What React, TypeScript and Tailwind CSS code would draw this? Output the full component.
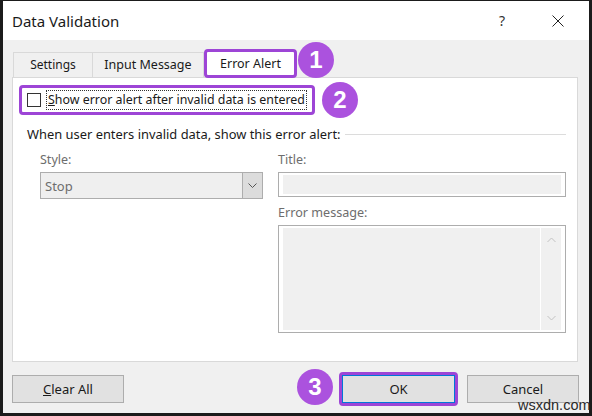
export default function App() {
  return (
    <div className="relative h-[416px] w-[592px] overflow-hidden bg-[#1b1b1b] pb-[3px] pl-[3px] pr-[3px] pt-[1px] font-['Noto_Sans',sans-serif] text-[12px] leading-[16px] text-[#1a1a1a]">
      <div className="flex h-full flex-col bg-[#f0f0f0]">
        {/* Title bar */}
        <div className="flex h-[39px] shrink-0 items-center bg-white pl-[9px]">
          <span className="text-[15px] leading-[20px]">Data Validation</span>
          <span className="ml-auto text-[14px] leading-[16px] text-[#333]">?</span>
          <svg className="ml-[47px] mr-[25px]" width="12" height="12" viewBox="0 0 12 12">
            <path d="M0.5 0.5 L11.5 11.5 M11.5 0.5 L0.5 11.5" stroke="#222" strokeWidth="1" fill="none" />
          </svg>
        </div>

        {/* Tabs */}
        <div className="ml-[10px] mt-[10px] flex h-[27px] shrink-0 items-end">
          <div className="flex h-[25px] w-[79px] items-center justify-center border-l border-t border-[#d9d9d9] bg-[#f0f0f0]">
            Settings
          </div>
          <div className="flex h-[25px] w-[112px] items-center justify-center border-l border-r border-t border-[#d9d9d9] bg-[#f0f0f0] text-[12.5px]">
            Input Message
          </div>
          <div className="relative z-10 mb-[-1px] flex h-[29px] w-[93px] items-center justify-center rounded-[4px] border-[3px] border-[#9d45d6] bg-white text-[12.5px]">
            Error Alert
          </div>
        </div>

        {/* Panel */}
        <div className="ml-[9px] flex h-[285px] w-[566px] shrink-0 flex-col border border-[#d9d9d9] bg-white">
          <div className="ml-[6px] mt-[7px] flex h-[30px] w-[296px] items-center rounded-[4px] border-[3px] border-[#9d45d6]">
            <div className="ml-[5px] h-[14px] w-[14px] border border-[#333] bg-white" />
            <div className="ml-[5px] flex h-[20px] items-center border border-dotted border-[#333] pl-px pr-px text-[12.4px]">
              <span>
                <span className="underline">S</span>how error alert after invalid data is entered
              </span>
            </div>
          </div>

          <div className="ml-[14px] mr-[11px] mt-[11px] flex items-center">
            <span className="whitespace-nowrap text-[12.9px]">When user enters invalid data, show this error alert:</span>
            <div className="ml-[4px] h-px flex-1 bg-[#dcdcdc]" />
          </div>

          <div className="ml-[27px] mt-[10px] flex gap-[15px]">
            <div className="flex w-[223px] flex-col">
              <span className="text-[12.5px] text-[#6d6d6d]">Style:</span>
              <div className="mt-[4px] flex h-[27px] items-stretch border border-[#adadad] bg-[#efefef]">
                <span className="flex flex-1 items-center pl-[4px] text-[13px] text-[#6d6d6d]">Stop</span>
                <div className="flex w-[20px] items-center justify-center border-l border-[#adadad] bg-[#dcdcdc]">
                  <svg width="9" height="6" viewBox="0 0 9 6">
                    <path d="M0.5 0.5 L4.5 4.5 L8.5 0.5" stroke="#555" strokeWidth="1" fill="none" />
                  </svg>
                </div>
              </div>
            </div>
            <div className="flex w-[288px] flex-col">
              <span className="text-[12.5px] text-[#6d6d6d]">Title:</span>
              <div className="mt-[4px] h-[25px] border border-[#adadad] bg-white p-[2px] pl-[4px] pr-[4px]">
                <div className="h-full w-full bg-[#f0f0f0]" />
              </div>
              <span className="mt-[8px] text-[12.6px] text-[#6d6d6d]">Error message:</span>
              <div className="mt-[4px] flex h-[108px] border border-[#adadad] bg-white p-[2px] pl-[4px]">
                <div className="h-full flex-1 bg-[#f0f0f0]" />
                <div className="ml-px flex h-full w-[20px] flex-col items-center justify-between bg-[#f0f0f0] py-[9px]">
                  <svg width="9" height="6" viewBox="0 0 9 6">
                    <path d="M0.5 5 L4.5 1 L8.5 5" stroke="#c2c2c2" strokeWidth="1" fill="none" />
                  </svg>
                  <svg width="9" height="6" viewBox="0 0 9 6">
                    <path d="M0.5 1 L4.5 5 L8.5 1" stroke="#c2c2c2" strokeWidth="1" fill="none" />
                  </svg>
                </div>
                <div className="w-[2px]" />
              </div>
            </div>
          </div>
        </div>

        {/* Bottom buttons */}
        <div className="mt-[10px] flex items-center">
          <div className="ml-[9px] flex h-[28px] w-[112px] items-center justify-center border border-[#adadad] bg-[#e1e1e1] text-[13px]">
            <span>
              <span className="underline">C</span>lear All
            </span>
          </div>
          <div className="ml-auto flex h-[34px] w-[119px] items-center rounded-[4px] border-[3px] border-[#9d45d6]">
            <div className="flex h-[28px] w-[113px] items-center justify-center border border-[#0078d7] bg-[#e1e1e1] text-[13px]">
              OK
            </div>
          </div>
          <div className="ml-[9px] mr-[10px] flex h-[28px] w-[112px] items-center justify-center border border-[#adadad] bg-[#e1e1e1] text-[13px]">
            Cancel
          </div>
        </div>
      </div>

      {/* Annotation badges */}
      <div className="absolute left-[298px] top-[42px] flex h-[36px] w-[36px] items-center justify-center rounded-full bg-[#ab52de] font-['Liberation_Sans',sans-serif] text-[24px] font-bold leading-none text-white">
        1
      </div>
      <div className="absolute left-[322px] top-[82px] flex h-[36px] w-[36px] items-center justify-center rounded-full bg-[#ab52de] font-['Liberation_Sans',sans-serif] text-[24px] font-bold leading-none text-white">
        2
      </div>
      <div className="absolute left-[297px] top-[369px] flex h-[36px] w-[36px] items-center justify-center rounded-full bg-[#ab52de] font-['Liberation_Sans',sans-serif] text-[24px] font-bold leading-none text-white">
        3
      </div>

      {/* Watermark */}
      <div className="absolute left-[518px] top-[397px] font-['Liberation_Sans',sans-serif] text-[14.5px] leading-[16px] text-[#2a2a2a]">
        wsxdn.com
      </div>
    </div>
  );
}
